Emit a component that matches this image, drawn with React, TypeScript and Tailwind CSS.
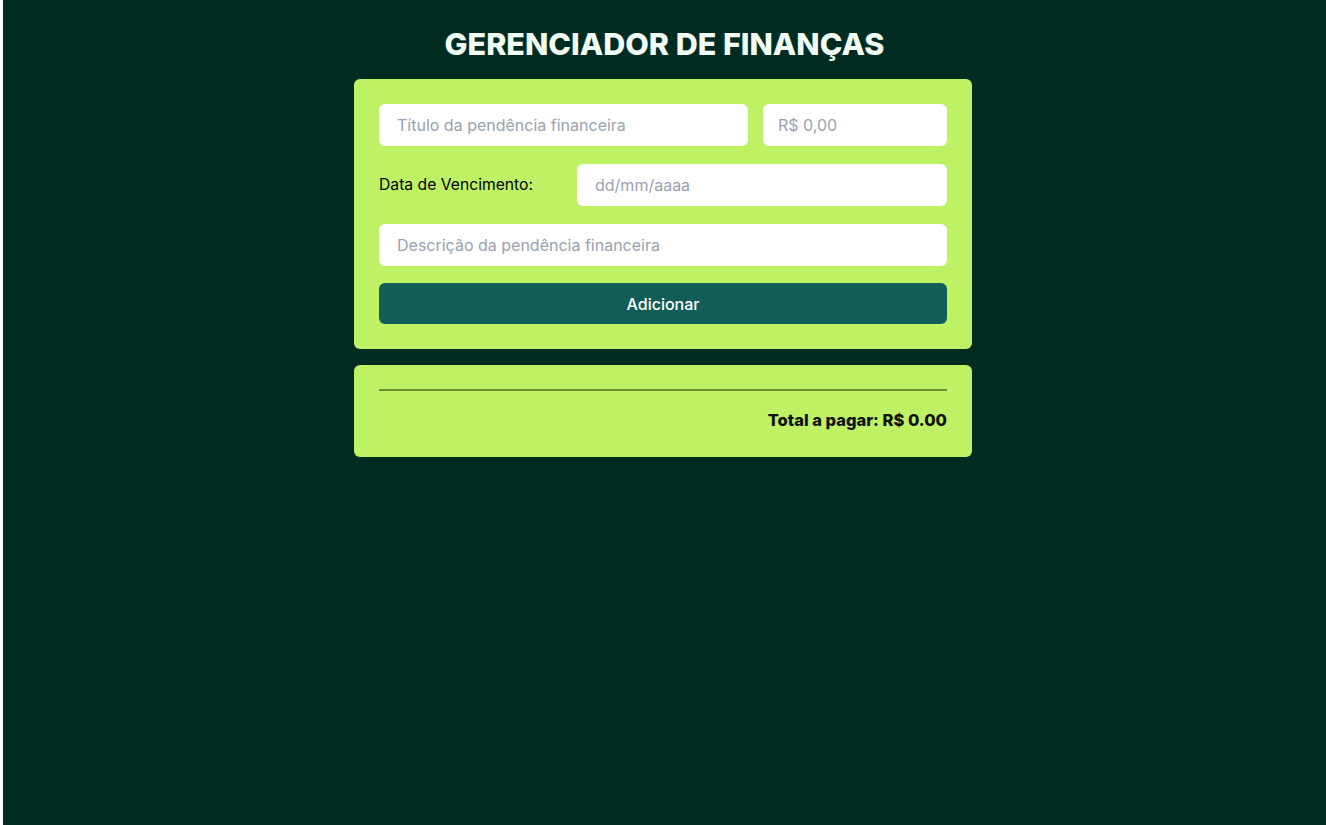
import { useState } from "react";

const App = () => {
  const [titulo, setTitulo] = useState("");
  const [valor, setValor] = useState("");
  const [data, setData] = useState("");
  const [descricao, setDescricao] = useState("");

  return (
    <div className="flex min-h-screen bg-white font-['Inter',sans-serif]">
      <div className="ml-[3px] flex flex-1 flex-col items-center bg-[#022c22] pt-[26px]">
        <h1 className="mb-[18px] text-[30.5px] font-extrabold leading-[35px] text-[#f0fdf4]">
          GERENCIADOR DE FINANÇAS
        </h1>

        {/* Formulário */}
        <div className="ml-[-3px] w-[618px] rounded-md bg-[#bef264] px-[25px] pb-[25px] pt-[25px]">
          <div className="flex gap-[15px]">
            <input
              value={titulo}
              onChange={(e) => setTitulo(e.target.value)}
              placeholder="Título da pendência financeira"
              className="h-[42px] flex-1 rounded-md bg-white px-[18px] text-[16px] text-gray-800 outline-none placeholder:text-gray-400"
            />
            <input
              value={valor}
              onChange={(e) => setValor(e.target.value)}
              placeholder="R$ 0,00"
              className="h-[42px] w-[184px] rounded-md bg-white px-[15px] text-[16px] text-gray-800 outline-none placeholder:text-gray-400"
            />
          </div>

          <div className="mt-[18px] flex items-center">
            <label className="w-[198px] text-[15.7px] text-black">
              Data de Vencimento:
            </label>
            <input
              value={data}
              onChange={(e) => setData(e.target.value)}
              placeholder="dd/mm/aaaa"
              className="h-[42px] flex-1 rounded-md bg-white px-[18px] text-[16px] text-gray-800 outline-none placeholder:text-gray-400"
            />
          </div>

          <input
            value={descricao}
            onChange={(e) => setDescricao(e.target.value)}
            placeholder="Descrição da pendência financeira"
            className="mt-[18px] block h-[42px] w-full rounded-md bg-white px-[18px] text-[16px] text-gray-800 outline-none placeholder:text-gray-400"
          />

          <button className="mt-[17px] h-[41px] w-full rounded-md bg-[#115e59] text-[16px] font-medium text-white">
            Adicionar
          </button>
        </div>

        {/* Lista */}
        <div className="ml-[-3px] mt-[16px] w-[618px] rounded-md bg-[#bef264] px-[25px] pb-[24px] pt-[24px]">
          <div className="border-t-2 border-[#6f8f2e]" />
          <p className="mt-[17px] text-right text-[16.5px] font-extrabold text-[#111]">
            Total a pagar: R$ 0.00
          </p>
        </div>
      </div>
    </div>
  );
};

export default App;
